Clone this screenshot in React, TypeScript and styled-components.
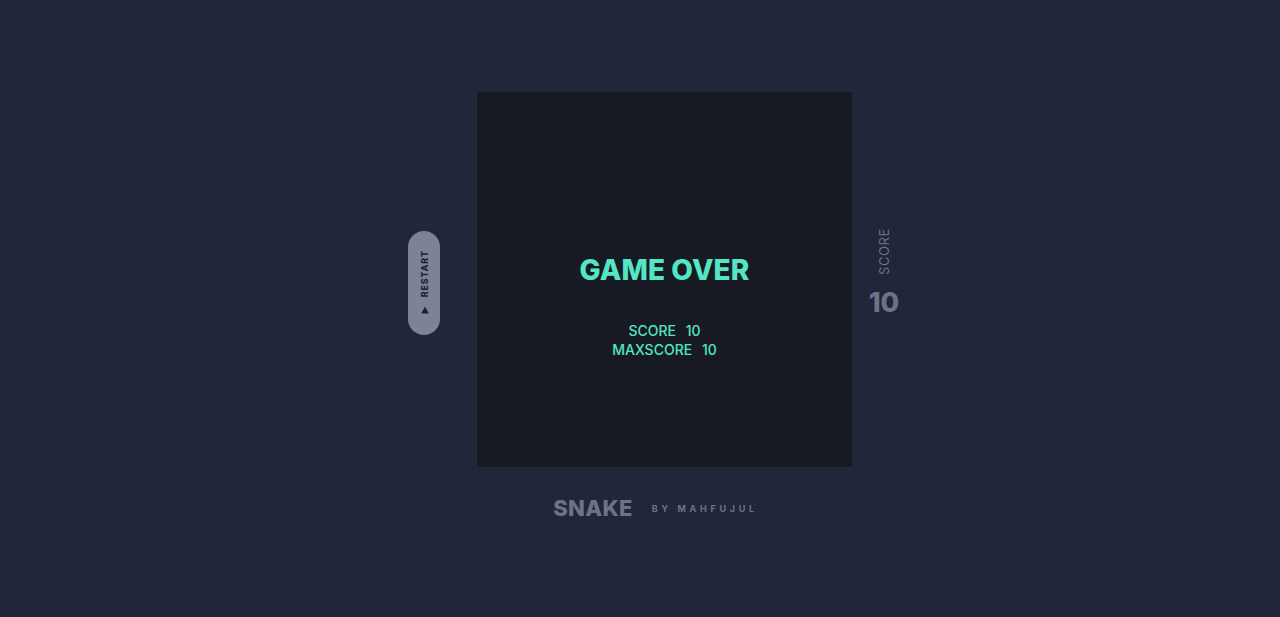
import React from "react";
import styled, { createGlobalStyle } from "styled-components";

const Global = createGlobalStyle`
  html, body { margin: 0; padding: 0; background: #21263a; }
  body { font-family: "Inter", "Lato", sans-serif; }
  #root { min-height: 617px; }
`;

const Page = styled.div`
  width: 1280px;
  height: 617px;
  background: #21263a;
  display: flex;
  flex-direction: column;
  align-items: center;
  padding-top: 92px;
  box-sizing: border-box;
`;

const Row = styled.div`
  display: flex;
  align-items: flex-start;
  padding-left: 27px;
`;

const RestartButton = styled.button`
  width: 32px;
  height: 104px;
  margin-top: 139px;
  margin-right: 37px;
  border: none;
  border-radius: 16px;
  background: #7c8397;
  display: flex;
  flex-direction: column;
  align-items: center;
  justify-content: flex-start;
  padding: 19px 0 0 1px;
  box-sizing: border-box;
  gap: 9px;
  cursor: pointer;
`;

const VerticalText = styled.span<{ $size: number; $weight: number; $color: string; $spacing: number }>`
  writing-mode: vertical-rl;
  transform: rotate(180deg);
  font-family: "Inter", sans-serif;
  font-size: ${(p) => p.$size}px;
  font-weight: ${(p) => p.$weight};
  color: ${(p) => p.$color};
  letter-spacing: ${(p) => p.$spacing}px;
  line-height: 1;
`;

const Board = styled.div`
  width: 375px;
  height: 375px;
  background: #181a23;
  display: flex;
  flex-direction: column;
  align-items: center;
  padding-top: 161px;
  box-sizing: border-box;
`;

const Title = styled.h1`
  margin: 0;
  font-family: "Inter", sans-serif;
  font-weight: 800;
  font-size: 28px;
  letter-spacing: 0.1px;
  color: #52e6c3;
  line-height: 34px;
`;

const Stats = styled.div`
  margin-top: 35px;
  display: flex;
  flex-direction: column;
  align-items: center;
  gap: 1px;
`;

const StatLine = styled.div`
  font-family: "Inter", sans-serif;
  font-weight: 500;
  font-size: 14px;
  color: #52e6c3;
  line-height: 18px;
  word-spacing: 6px;
`;

const ScoreSide = styled.div`
  margin-left: 17px;
  margin-top: 136px;
  display: flex;
  flex-direction: column;
  align-items: center;
  width: 30px;
  gap: 13px;
`;

const ScoreValue = styled.div`
  font-family: "Inter", sans-serif;
  font-weight: 800;
  font-size: 27px;
  color: #6c7388;
  line-height: 30px;
`;

const Footer = styled.div`
  display: flex;
  align-items: center;
  gap: 19px;
  margin-top: 28px;
  margin-left: 31px;
`;

const Brand = styled.div`
  font-family: "Inter", sans-serif;
  font-weight: 800;
  font-size: 22px;
  line-height: 26px;
  color: #6c7388;
  letter-spacing: 0.3px;
`;

const Byline = styled.div`
  font-family: "Inter", sans-serif;
  font-weight: 700;
  font-size: 9px;
  line-height: 10px;
  margin-top: 1px;
  color: #6c7388;
  letter-spacing: 3.7px;
`;

export default function App() {
  return (
    <>
      <Global />
      <Page>
        <Row>
          <RestartButton>
            <VerticalText $size={9} $weight={800} $color="#1e2230" $spacing={0.8}>
              RESTART
            </VerticalText>
            <svg width="8" height="8" viewBox="0 0 8 8">
              <polygon points="4,0.5 7.8,7.5 0.2,7.5" fill="#1e2230" />
            </svg>
          </RestartButton>
          <Board>
            <Title>GAME OVER</Title>
            <Stats>
              <StatLine>SCORE 10</StatLine>
              <StatLine>MAXSCORE 10</StatLine>
            </Stats>
          </Board>
          <ScoreSide>
            <VerticalText $size={13} $weight={400} $color="#6c7388" $spacing={0.6}>
              SCORE
            </VerticalText>
            <ScoreValue>10</ScoreValue>
          </ScoreSide>
        </Row>
        <Footer>
          <Brand>SNAKE</Brand>
          <Byline>BY MAHFUJUL</Byline>
        </Footer>
      </Page>
    </>
  );
}
